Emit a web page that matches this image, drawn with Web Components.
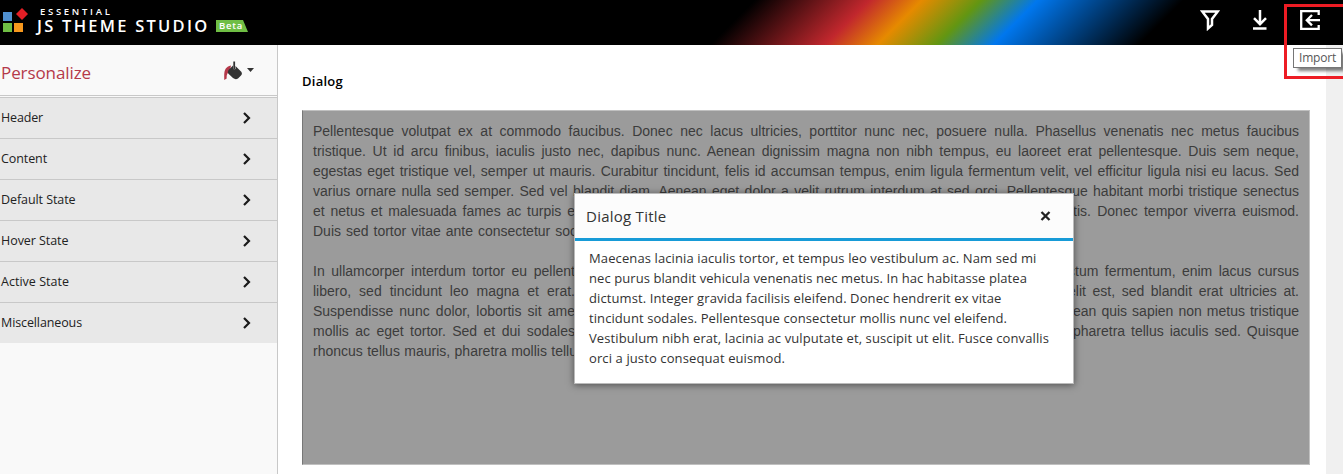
<!DOCTYPE html>
<html lang="en">
<head>
<meta charset="utf-8">
<title>JS Theme Studio</title>
<style>
html,body{margin:0;height:474px;overflow:hidden;background:#fff}
body{font-family:"Open Sans","Noto Sans",sans-serif;color:#333}
</style>
</head>
<body>
<theme-studio></theme-studio>
<script>
const define=(name,html,setup)=>customElements.define(name,class extends HTMLElement{
  constructor(){super();this.attachShadow({mode:'open'}).innerHTML=html}
  connectedCallback(){if(setup)setup(this)}
});

/* One line of text spaced evenly to a given width */
define('fit-text',`<style>:host{display:block;white-space:nowrap}span{display:inline-block;white-space:pre}</style><span><slot></slot></span>`,el=>{
  const s=el.shadowRoot.querySelector('span');
  const n=el.textContent.length;
  const w=s.getBoundingClientRect().width;
  s.style.letterSpacing=((+el.getAttribute('width')-w)/n)+'px';
});

define('studio-logo',`<style>
:host{display:flex;height:45px}
svg{display:block}
.mark{margin:8px 0 0 3px}
.name{margin-left:9px;color:#fff;font-weight:600}
.top{font-size:9.5px;line-height:10px;margin:7px 0 0 3px}
.row{display:flex;align-items:flex-start}
.main{font-size:16.5px;line-height:18px;width:172px}
.beta{margin:3px 0 0 7px;width:32px;height:12px;box-sizing:border-box;padding-left:3px;background:#6fbe44;clip-path:polygon(0 0,27px 0,32px 100%,0 100%);font-size:9.5px;line-height:12px}
</style>
<svg class="mark" width="25" height="25" viewBox="0 0 25 25"><path fill="#5090d0" d="M0 4h9v9H0z"/><path fill="#6fbe44" d="M0 15h9v9H0z"/><path fill="#f7981d" d="M11 15h9v9h-9z"/><path fill="#e31e25" d="M19 0l6 6-6 6-6-6z"/></svg>
<div class="name"><fit-text class="top" width="72.500">ESSENTIAL</fit-text><div class="row"><fit-text class="main" width="172.500">JS THEME STUDIO</fit-text><div class="beta"><fit-text width="24">Beta</fit-text></div></div></div>`);

define('app-header',`<style>
:host{display:flex;justify-content:space-between;height:45px;background:linear-gradient(135deg,#000 534px,#c1272d 615px,#e68a00 652px,#629612 694px,#0077ee 734px,#000 837px)}
.tools{display:flex;padding:10px 22px 0 0;gap:30px}
svg{display:block;fill:none;stroke:#fff}
</style><studio-logo></studio-logo>
<div class="tools">
<svg width="20" height="21" viewBox="0 0 20 21" stroke-width="2.5"><path d="M2.200 1.400h15.600L12 9v6l-4 3.500V9z"/></svg>
<svg width="20" height="21" viewBox="0 0 20 21" stroke-width="2.500"><path d="M10 0v14M4 8.200l6 6 6-6M3 18.500h13.500"/></svg>
<svg width="21" height="21" viewBox="0 0 21 21" stroke-width="2.300"><path d="M18.700 5V1.200H1.200v17.700h17.500V15M20 10.200H7M12 5l-5.200 5.200 5.200 5.200"/></svg>
</div>`);

define('panel-item',`<style>
:host{display:flex;justify-content:space-between;align-items:center;height:40px;padding:0 26px 0 1px;background:#e8e8e8;border-top:1px solid #c8c8c8;font-size:12.5px;line-height:18px;color:#222}
svg{display:block;margin-top:-1px}
</style><slot></slot><svg width="8" height="12" viewBox="0 0 8 12" fill="none" stroke="#1a1a1a" stroke-width="2.2"><path d="M1 1l5 5-5 5"/></svg>`);

define('side-panel',`<style>
:host{display:block;width:277px;height:429px;background:#f9f9f9;border-right:1px solid #c8c8c8}
header{height:50px;border-bottom:1px solid #c8c8c8;margin-bottom:1px;display:flex;color:#b5394a}
.title{font-size:17px;line-height:24px;margin:16px 0 0 1px;width:223px}
.pour{margin-top:16px}.caret{margin:23px 0 0 4px}
</style><header><fit-text class="title" width="90">Personalize</fit-text>
<svg class="pour" width="19" height="20" viewBox="0 0 19 20"><path d="M7 4.500C1 6-.2 9 .3 19l2.400-1.600c-.3-3.600.5-5.500 3.200-7.500z" fill="#b5394a"/><path d="M4.500 9l4.500-4.500v3l1 1 1.500-.5V5l6 6q1.200 2-.5 3.500l-3 3q-2.500 1.500-5-.5L4.200 12.500q-.8-2 .3-3.500z" fill="#333"/><path d="M10.200.500v8" stroke="#333" stroke-width="1.800"/></svg>
<svg class="caret" width="7" height="4" viewBox="0 0 7 4"><path d="M0 0h7L3.500 4z" fill="#333"/></svg></header>
<panel-item><fit-text width="42">Header</fit-text></panel-item>
<panel-item><fit-text width="46">Content</fit-text></panel-item>
<panel-item><fit-text width="74.500">Default State</fit-text></panel-item>
<panel-item><fit-text width="67.500">Hover State</fit-text></panel-item>
<panel-item><fit-text width="68">Active State</fit-text></panel-item>
<panel-item><fit-text width="81">Miscellaneous</fit-text></panel-item>`);

define('modal-dialog',`<style>
:host{display:block;box-sizing:border-box;width:500px;height:191px;border:1px solid #bbb;background:#fff;box-shadow:0 1px 7px rgba(0,0,0,.5);color:#333}
header{height:44px;background:#fcfcfc;border-bottom:3px solid #179bd7;display:flex;justify-content:space-between}
.title{font-size:15px;line-height:22px;margin:11px 0 0 11px}
.x{margin:17px 22px 0 0}
.body{padding:7px 14px;font-size:13px;line-height:20px}
</style><header><fit-text class="title" width="80.500">Dialog Title</fit-text><svg class="x" width="11" height="10" viewBox="0 0 11 10"><path d="M1.500 1l8 8M9.500 1l-8 8" stroke="#222" stroke-width="2.300"/></svg></header>
<div class="body">
<fit-text width="447.500">Maecenas lacinia iaculis tortor, et tempus leo vestibulum ac. Nam sed mi</fit-text>
<fit-text width="438">nec purus blandit vehicula venenatis nec metus. In hac habitasse platea</fit-text>
<fit-text width="412.500">dictumst. Integer gravida facilisis eleifend. Donec hendrerit ex vitae</fit-text>
<fit-text width="418">tincidunt sodales. Pellentesque consectetur mollis nunc vel eleifend.</fit-text>
<fit-text width="460">Vestibulum nibh erat, lacinia ac vulputate et, suscipit ut elit. Fusce convallis</fit-text>
<fit-text width="196">orci a justo consequat euismod.</fit-text>
</div>`);

define('article-text',`<style>
:host{display:block;font:14px/20px "Liberation Sans",Arial,sans-serif;color:#3c3c3c}
section{margin:0 0 20px}
div{height:20px;text-align-last:justify;white-space:nowrap}
.split{display:flex;justify-content:space-between}
.split span:first-child{width:262px}
.split span:last-child{width:226px}
.split span.wide{width:231px}
.end{width:264px}
</style>
<section><div>Pellentesque volutpat ex at commodo faucibus. Donec nec lacus ultricies, porttitor nunc nec, posuere nulla. Phasellus venenatis nec metus faucibus</div>
<div>tristique. Ut id arcu finibus, iaculis justo nec, dapibus nunc. Aenean dignissim magna non nibh tempus, eu laoreet erat pellentesque. Duis sem neque,</div>
<div>egestas eget tristique vel, semper ut mauris. Curabitur tincidunt, felis id accumsan tempus, enim ligula fermentum velit, vel efficitur ligula nisi eu lacus. Sed</div>
<div>varius ornare nulla sed semper. Sed vel blandit diam. Aenean eget dolor a velit rutrum interdum at sed orci. Pellentesque habitant morbi tristique senectus</div>
<div class="split"><span>et netus et malesuada fames ac turpis e</span><span>tis. Donec tempor viverra euismod.</span></div>
<div class="end">Duis sed tortor vitae ante consectetur soc</div></section>
<section><div class="split"><span>In ullamcorper interdum tortor eu pellent</span><span class="wide">ctum fermentum, enim lacus cursus</span></div>
<div class="split"><span>libero, sed tincidunt leo magna et erat.</span><span class="wide">elit est, sed blandit erat ultricies at.</span></div>
<div class="split"><span>Suspendisse nunc dolor, lobortis sit ame</span><span>ean quis sapien non metus tristique</span></div>
<div class="split"><span>mollis ac eget tortor. Sed et dui sodales</span><span>pharetra tellus iaculis sed. Quisque</span></div>
<div class="end">rhoncus tellus mauris, pharetra mollis tellu</div></section>`);

define('preview-pane',`<style>
:host{display:block;flex:1;padding:26px 16px 0 24px}
h1{margin:0;font-size:13px;line-height:20px;font-weight:600;color:#000}
.stage{position:relative;box-sizing:border-box;height:355px;margin-top:19px;padding:10px 10px;border:1px solid #c0c0c0;border-left-color:#777;background:#9b9b9b}
modal-dialog{position:absolute;left:271px;top:82px}
</style><h1><fit-text width="41">Dialog</fit-text></h1><div class="stage"><article-text></article-text><modal-dialog></modal-dialog></div>`);

define('tool-tip',`<style>
:host{display:block;box-sizing:border-box;width:49px;height:20px;border:1px solid #767676;background:#fff;box-shadow:4px 4px 3px -1px rgba(0,0,0,.5);font-size:12px;line-height:18px;padding-left:5px;color:#575757}
</style><fit-text width="37">Import</fit-text>`);

define('theme-studio',`<style>
:host{display:block;position:relative;width:1343px;height:474px;overflow:hidden}
main{display:flex;height:429px}
.scroll{width:17px;background:#f0f0f0}
.mark{position:absolute;box-sizing:border-box;left:1284px;top:4px;width:70px;height:75px;border:3px solid #ed1c24}
tool-tip{position:absolute;left:1293px;top:48px}
</style><app-header></app-header><main><side-panel></side-panel><preview-pane></preview-pane><div class="scroll"></div></main><tool-tip></tool-tip><div class="mark"></div>`);
</script>
</body>
</html>
